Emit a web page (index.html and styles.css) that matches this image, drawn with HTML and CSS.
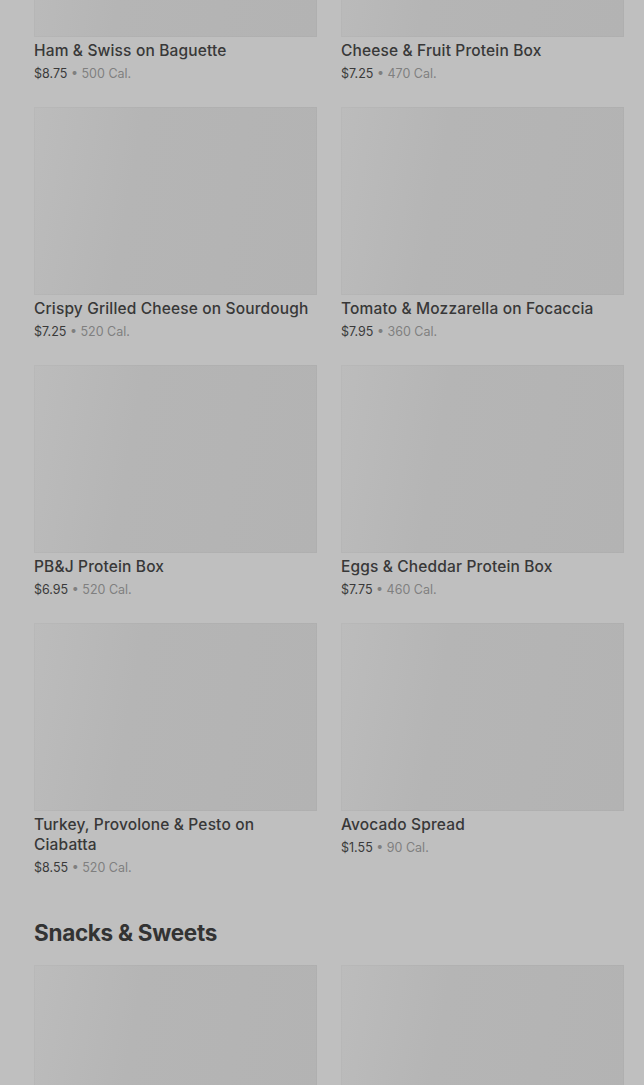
FILE: index.html
```html
<!DOCTYPE html>
<html lang="en">
<head>
<meta charset="UTF-8">
<meta name="viewport" content="width=device-width, initial-scale=1.0">
<title>Menu</title>
<link rel="stylesheet" href="styles.css">
</head>
<body>
<div class="menu">
  <section class="category">
    <div class="grid">
      <div class="item">
        <div class="thumb"></div>
        <div class="name">Ham &amp; Swiss on Baguette</div>
        <div class="meta"><span class="price">$8.75</span> • 500 Cal.</div>
      </div>
      <div class="item">
        <div class="thumb"></div>
        <div class="name">Cheese &amp; Fruit Protein Box</div>
        <div class="meta"><span class="price">$7.25</span> • 470 Cal.</div>
      </div>
      <div class="item">
        <div class="thumb"></div>
        <div class="name">Crispy Grilled Cheese on Sourdough</div>
        <div class="meta"><span class="price">$7.25</span> • 520 Cal.</div>
      </div>
      <div class="item">
        <div class="thumb"></div>
        <div class="name">Tomato &amp; Mozzarella on Focaccia</div>
        <div class="meta"><span class="price">$7.95</span> • 360 Cal.</div>
      </div>
      <div class="item">
        <div class="thumb"></div>
        <div class="name">PB&amp;J Protein Box</div>
        <div class="meta"><span class="price">$6.95</span> • 520 Cal.</div>
      </div>
      <div class="item">
        <div class="thumb"></div>
        <div class="name">Eggs &amp; Cheddar Protein Box</div>
        <div class="meta"><span class="price">$7.75</span> • 460 Cal.</div>
      </div>
      <div class="item">
        <div class="thumb"></div>
        <div class="name">Turkey, Provolone &amp; Pesto on Ciabatta</div>
        <div class="meta"><span class="price">$8.55</span> • 520 Cal.</div>
      </div>
      <div class="item">
        <div class="thumb"></div>
        <div class="name">Avocado Spread</div>
        <div class="meta"><span class="price">$1.55</span> • 90 Cal.</div>
      </div>
    </div>
  </section>

  <section class="category">
    <h2 class="category-title">Snacks &amp; Sweets</h2>
    <div class="grid">
      <div class="item">
        <div class="thumb"></div>
      </div>
      <div class="item">
        <div class="thumb"></div>
      </div>
    </div>
  </section>
</div>
</body>
</html>
```

FILE: styles.css
```css
body {
  margin: 0;
  background-color: #bfbfbf;
  font-family: Inter, Roboto, sans-serif;
  color: #333333;
  overflow: hidden;
}

.menu {
  padding: 0 20px 0 34px;
  margin-top: -151px;
}

.grid {
  display: grid;
  grid-template-columns: 283px 283px;
  column-gap: 24px;
  row-gap: 24px;
}

.thumb {
  height: 188px;
  background: linear-gradient(100deg, #bcbcbc 0%, #b5b5b5 35%, #b3b3b3 100%);
  box-shadow: inset 0 0 0 1px rgba(0, 0, 0, 0.02);
}

.name {
  margin-top: 4px;
  font-size: 15.5px;
  line-height: 20px;
  font-weight: 500;
  color: #383838;
  letter-spacing: 0.15px;
}

.meta {
  margin-top: 4px;
  font-size: 12.5px;
  line-height: 18px;
  color: #7f7f7f;
}

.price {
  color: #3a3a3a;
}

.category-title {
  margin: 42px 0 18px;
  font-size: 22.5px;
  line-height: 28px;
  font-weight: 700;
  color: #333333;
  letter-spacing: -0.3px;
}
```
